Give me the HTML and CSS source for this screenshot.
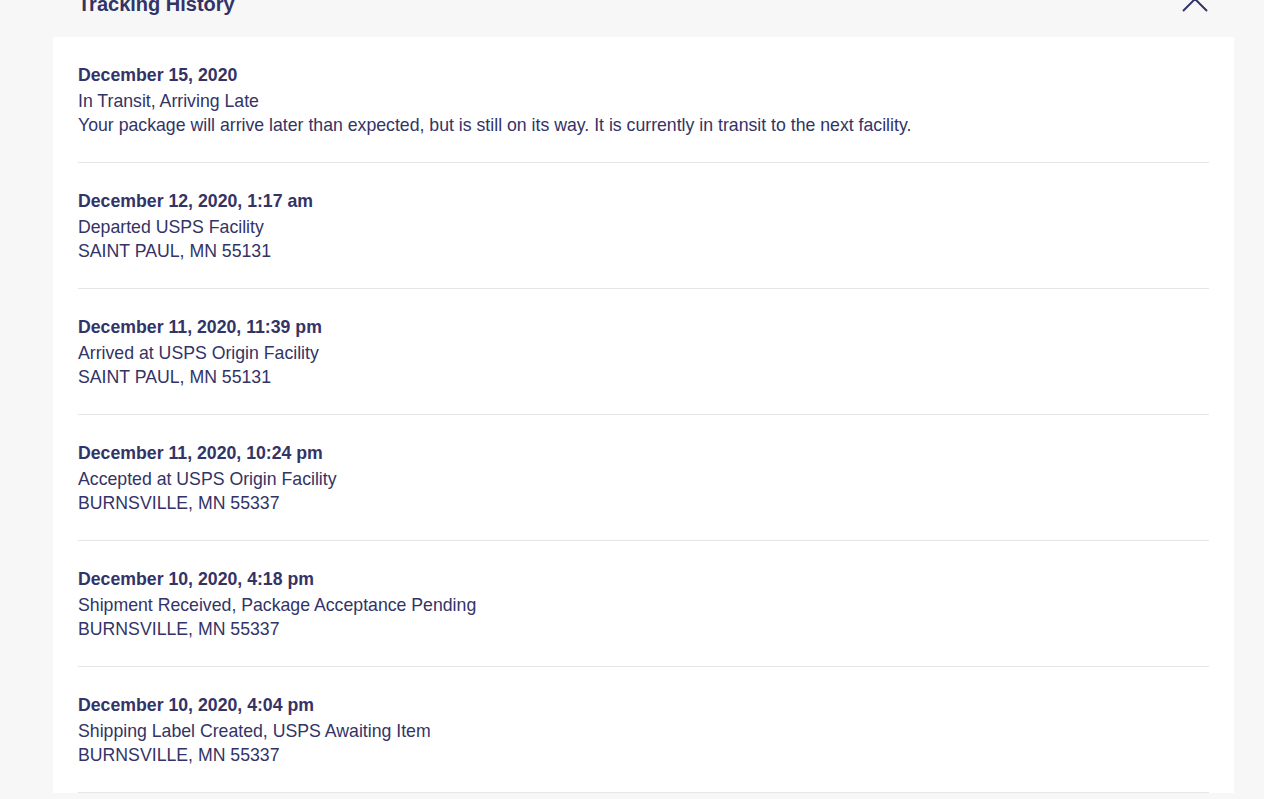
FILE: index.html
```html
<!DOCTYPE html>
<html lang="en">
<head>
    <meta charset="UTF-8">
    <title>Tracking History</title>
    <link rel="stylesheet" href="styles.css">
</head>
<body>
    <div class="page">
        <div class="head">
            <h2>Tracking History</h2>
            <button class="toggle" aria-label="collapse">
                <svg width="28" height="16" viewBox="0 0 28 16"><path d="M2 14 L14 2 L26 14" fill="none" stroke="#333366" stroke-width="2"/></svg>
            </button>
        </div>
        <div class="card">
            <ul class="history">
                <li>
                    <div class="date">December 15, 2020</div>
                    <div>In Transit, Arriving Late</div>
                    <div>Your package will arrive later than expected, but is still on its way. It is currently in transit to the next facility.</div>
                </li>
                <li>
                    <div class="date">December 12, 2020, 1:17 am</div>
                    <div>Departed USPS Facility</div>
                    <div>SAINT PAUL, MN 55131</div>
                </li>
                <li>
                    <div class="date">December 11, 2020, 11:39 pm</div>
                    <div>Arrived at USPS Origin Facility</div>
                    <div>SAINT PAUL, MN 55131</div>
                </li>
                <li>
                    <div class="date">December 11, 2020, 10:24 pm</div>
                    <div>Accepted at USPS Origin Facility</div>
                    <div>BURNSVILLE, MN 55337</div>
                </li>
                <li>
                    <div class="date">December 10, 2020, 4:18 pm</div>
                    <div>Shipment Received, Package Acceptance Pending</div>
                    <div>BURNSVILLE, MN 55337</div>
                </li>
                <li>
                    <div class="date">December 10, 2020, 4:04 pm</div>
                    <div>Shipping Label Created, USPS Awaiting Item</div>
                    <div>BURNSVILLE, MN 55337</div>
                </li>
            </ul>
        </div>
    </div>
</body>
</html>
```

FILE: styles.css
```css
html, body{
    margin:0;
    padding:0;
    background:#f7f7f7;
}
body{
    font-family:"Liberation Sans", Arial, sans-serif;
    color:#333366;
}
.page{
    padding:0 30px 0 53px;
    margin-top:-8px;
}
.head{
    display:flex;
    justify-content:space-between;
    align-items:flex-start;
    padding:0 25px;
    height:45px;
}
.head h2{
    margin:0;
    font-size:20px;
    line-height:24px;
    font-weight:bold;
}
.toggle{
    border:0;
    background:none;
    padding:0;
    margin:5px 0 0 0;
    cursor:pointer;
}
.toggle svg{
    display:block;
}
.card{
    background:#fff;
    padding:0 25px;
}
.history{
    list-style:none;
    margin:0;
    padding:0;
}
.history li{
    padding:26px 0 24px;
    border-bottom:1px solid #e6e6e6;
    font-size:17.7px;
    line-height:25px;
}
.history .date{
    font-weight:bold;
}
.history .date + div{
    margin-top:1px;
    margin-bottom:-1px;
}
```
